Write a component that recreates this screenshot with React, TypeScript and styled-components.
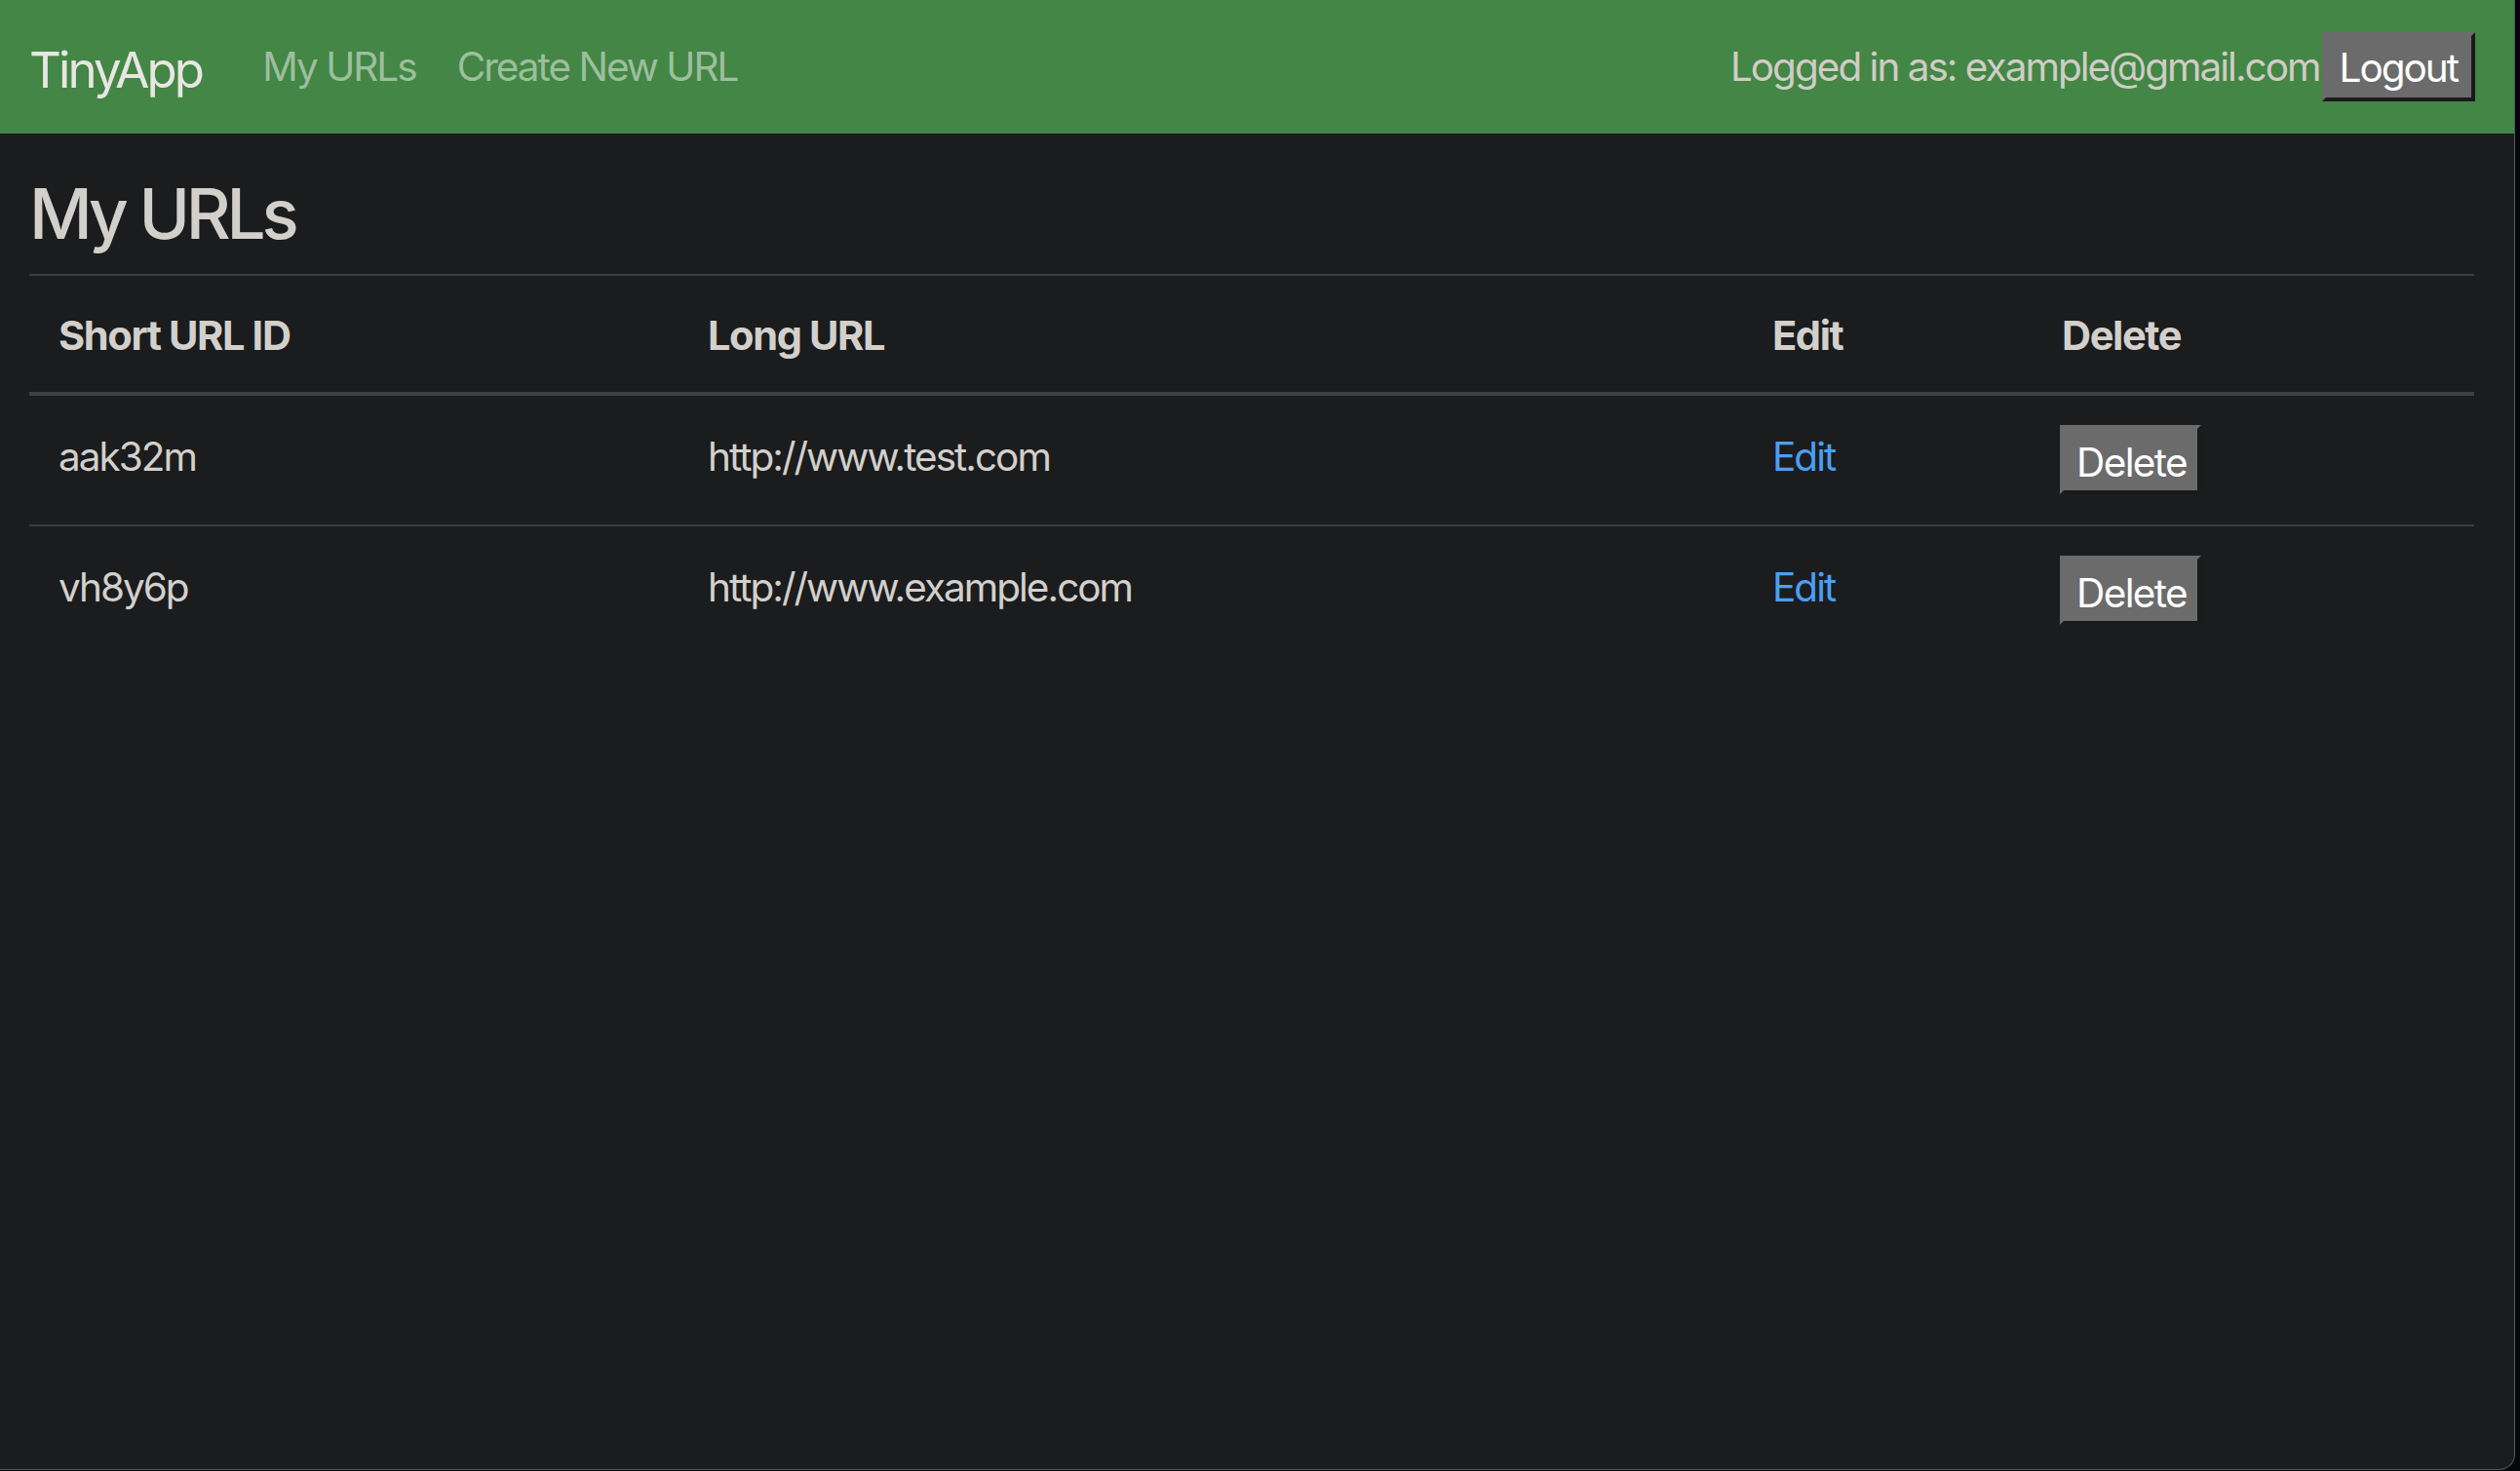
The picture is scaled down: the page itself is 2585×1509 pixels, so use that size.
import styled, { createGlobalStyle } from 'styled-components';

const GlobalStyle = createGlobalStyle`
  html, body {
    margin: 0;
    padding: 0;
    background: #06070a;
  }
  body {
    font-family: Inter, "Noto Sans", "Liberation Sans", sans-serif;
    color: #d3d0cb;
  }
`;

const Frame = styled.div`
  width: 2580px;
  height: 1508px;
  box-sizing: border-box;
  background-color: #1b1c1e;
  border-right: 1px solid #55565a;
  border-bottom: 1px solid #55565a;
  border-bottom-right-radius: 16px;
  overflow: hidden;
`;

const NavBar = styled.nav`
  height: 137px;
  display: flex;
  align-items: center;
  background-color: #438645;
  padding: 0 40px 0 30px;
`;

const Brand = styled.a`
  font-size: 51px;
  color: #e8e6e3;
  text-decoration: none;
  margin-right: 41px;
  margin-top: 6px;
  letter-spacing: -2.9px;
`;

const NavLinks = styled.div`
  display: flex;
  align-items: center;
`;

const NavLink = styled.a`
  font-size: 40.5px;
  color: #9cbf9d;
  text-decoration: none;
  padding: 0 21px;
  letter-spacing: -2px;
`;

const UserArea = styled.div`
  margin-left: auto;
  display: flex;
  align-items: center;
  gap: 3px;
`;

const UserText = styled.span`
  font-size: 40.5px;
  color: #d0ccc6;
  letter-spacing: -2px;
`;

const Button = styled.button<{ $wide?: boolean }>`
  box-sizing: border-box;
  height: 71px;
  border-style: solid;
  border-width: 4px;
  border-color: #6b6b6b #1a1a1a #1a1a1a #6b6b6b;
  background-color: #6b6b6b;
  color: #ffffff;
  font-family: inherit;
  font-size: 40.5px;
  line-height: 57px;
  padding: ${p => (p.$wide ? 1 : 6)}px ${p => (p.$wide ? 14 : 11)}px 0 13px;
  letter-spacing: ${p => (p.$wide ? -2 : -1.6)}px;
  display: block;
  cursor: pointer;
`;

const Main = styled.main`
  padding: 0 40px 0 30px;
`;

const Title = styled.h3`
  margin: 40px 0 19px 0;
  font-size: 71px;
  font-weight: 500;
  line-height: 1.2;
  color: #d3d0cb;
  letter-spacing: -4.2px;
`;

const Table = styled.table`
  width: 2508px;
  border-collapse: collapse;
  table-layout: fixed;
  font-size: 40.5px;
  line-height: 62px;
  letter-spacing: -2px;
`;

const HeadCell = styled.th<{ $width: number }>`
  box-sizing: border-box;
  width: ${p => p.$width}px;
  text-align: left;
  font-size: 41.6px;
  font-weight: 700;
  letter-spacing: -1.4px;
  padding: 30px 30px 27px 30px;
  border-top: 2px solid #3b3d40;
  border-bottom: 4px solid #3e4043;
  vertical-align: top;
  color: #d3d0cb;
`;

const Cell = styled.td`
  padding: 32px 30px 29px 30px;
  border-top: 2px solid #3b3d40;
  vertical-align: top;
  color: #d3d0cb;
`;

const ButtonCell = styled(Cell)`
  padding: 30px 30px 31px 28px;
`;

const EditLink = styled.a`
  color: #4b9ff2;
  text-decoration: none;
`;

const columns = [
  { label: 'Short URL ID', width: 666 },
  { label: 'Long URL', width: 1092 },
  { label: 'Edit', width: 297 },
  { label: 'Delete', width: 453 },
];

const urls = [
  { id: 'aak32m', longURL: 'http://www.test.com' },
  { id: 'vh8y6p', longURL: 'http://www.example.com' },
];

function App() {
  return (
    <>
      <GlobalStyle />
      <Frame>
        <NavBar>
          <Brand href="#">TinyApp</Brand>
          <NavLinks>
            <NavLink href="#">My URLs</NavLink>
            <NavLink href="#">Create New URL</NavLink>
          </NavLinks>
          <UserArea>
            <UserText>Logged in as: example@gmail.com</UserText>
            <Button $wide>Logout</Button>
          </UserArea>
        </NavBar>
        <Main>
          <Title>My URLs</Title>
          <Table>
            <thead>
              <tr>
                {columns.map(col => (
                  <HeadCell key={col.label} $width={col.width}>
                    {col.label}
                  </HeadCell>
                ))}
              </tr>
            </thead>
            <tbody>
              {urls.map(url => (
                <tr key={url.id}>
                  <Cell>{url.id}</Cell>
                  <Cell>{url.longURL}</Cell>
                  <Cell>
                    <EditLink href="#">Edit</EditLink>
                  </Cell>
                  <ButtonCell>
                    <Button>Delete</Button>
                  </ButtonCell>
                </tr>
              ))}
            </tbody>
          </Table>
        </Main>
      </Frame>
    </>
  );
}

export default App;
